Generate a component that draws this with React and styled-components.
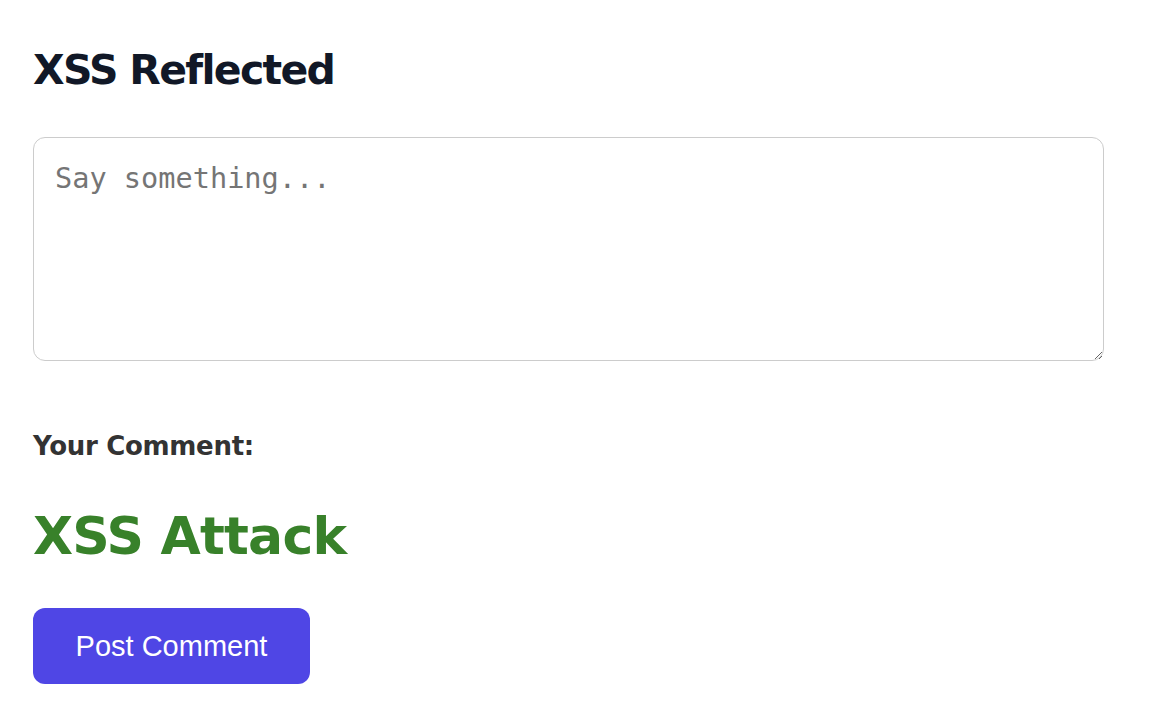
import React, { useState } from 'react'
import styled, { createGlobalStyle } from 'styled-components'

const GlobalStyle = createGlobalStyle`
  body {
    margin: 0;
    background: #ffffff;
    font-family: "DejaVu Sans", Verdana, sans-serif;
  }
`

const Page = styled.div`
  display: flex;
  flex-direction: column;
  align-items: flex-start;
  padding: 46px 33px 30px;
`

const Title = styled.h1`
  margin: 0 0 43px;
  font-family: "DejaVu Sans", Verdana, sans-serif;
  font-size: 41px;
  line-height: 48px;
  font-weight: bold;
  letter-spacing: -1.7px;
  color: #111827;
`

const CommentBox = styled.textarea`
  box-sizing: border-box;
  width: 1071px;
  height: 224px;
  padding: 21px 21px;
  border: 1px solid #cccccc;
  border-radius: 12px;
  font-family: "DejaVu Sans Mono", Menlo, monospace;
  font-size: 28.6px;
  line-height: 38px;
  color: #222;
  outline: none;
  resize: both;

  &::placeholder {
    color: #757575;
  }
`

const Label = styled.h3`
  margin: 69px 0 0;
  font-size: 26px;
  line-height: 32px;
  font-weight: bold;
  letter-spacing: -0.3px;
  color: #333333;
`

const Reflected = styled.div`
  margin: 43px 0 0;
  font-size: 52px;
  line-height: 62px;
  font-weight: bold;
  letter-spacing: -0.8px;
  color: #38812a;
`

const PostButton = styled.button`
  margin-top: 41px;
  width: 277px;
  height: 76px;
  border: none;
  border-radius: 12px;
  background: #4f46e5;
  color: #ffffff;
  font-family: "Liberation Sans", Arial, sans-serif;
  font-size: 29px;
  cursor: pointer;
`

export default function App() {
  const [text, setText] = useState('')

  return (
    <>
      <GlobalStyle />
      <Page>
        <Title>XSS Reflected</Title>
        <CommentBox
          placeholder="Say something..."
          value={text}
          onChange={e => setText(e.target.value)}
        />
        <Label>Your Comment:</Label>
        <Reflected>XSS Attack</Reflected>
        <PostButton>Post Comment</PostButton>
      </Page>
    </>
  )
}
